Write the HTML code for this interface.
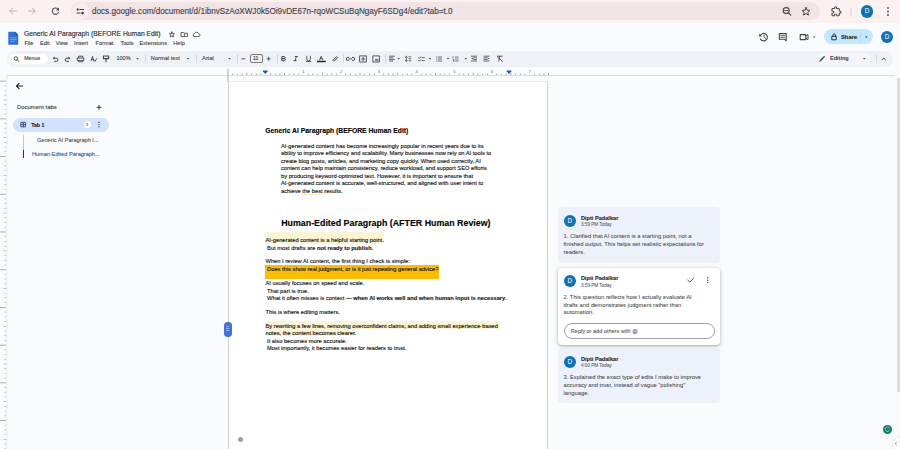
<!DOCTYPE html>
<html><head><meta charset="utf-8"><style>
*{box-sizing:border-box}
html,body{margin:0;padding:0;width:900px;height:449px;overflow:hidden;background:#f9fbfd;font-family:"Liberation Sans",sans-serif;color:#1f1f1f}
.a{position:absolute;white-space:nowrap}
.t{position:absolute;white-space:nowrap;line-height:1;-webkit-text-stroke-width:0.12px}
#chrome{position:absolute;left:0;top:0;width:900px;height:23px;background:#fbf1f1}
#omni{position:absolute;left:71px;top:2px;width:749px;height:18px;border-radius:9px;background:#f1e4e6}
#tb{position:absolute;left:7px;top:50.6px;width:886.3px;height:16.2px;border-radius:8px;background:#eef2f7}
.sep{position:absolute;width:0.8px;background:#d5d8dc}
#page{position:absolute;left:228px;top:81px;width:320px;height:380px;background:#fff;border:1px solid #cfd1d4;border-top-color:#e9eaec;border-bottom:none}
.doc{position:absolute;font-size:5.72px;line-height:1;margin-top:1.4px;white-space:nowrap;color:#1a1a1a;-webkit-text-stroke:0.15px #1a1a1a}
.card{position:absolute;left:557.8px;width:162.6px;border-radius:4px;background:#edf2fa}
.av{position:absolute;border-radius:50%;background:#0d71b8;color:#fff;text-align:center}
.cname{position:absolute;font-size:5.6px;font-weight:bold;line-height:1;white-space:nowrap;color:#2a2a2a}
.ctime{position:absolute;font-size:4.6px;line-height:1;white-space:nowrap;color:#5f6368}
.ctext{position:absolute;font-size:5.75px;line-height:7.8px;color:#3c4043;white-space:nowrap}
#root{position:absolute;left:0;top:0;width:900px;height:449px;overflow:hidden}
#icons{position:absolute;left:0;top:0;width:900px;height:449px;overflow:visible}
#icons .s{fill:none;stroke:#444746;stroke-width:1;stroke-linecap:round;stroke-linejoin:round}
#icons .f{fill:#444746;stroke:none}
</style></head><body>
<div id="root"><div id="chrome"></div><div id="omni"></div>
<div class="a" style="left:71.5px;top:2.5px;width:17px;height:17px;border-radius:50%;background:#f8eeee"></div>
<div class="t" style="left:92px;top:7.8px;font-size:8.14px;color:#3f3f3f;font-weight:normal;">docs.google.com/document/d/1ibnvSzAoXWJ0k5Oi9vDE67n-rqoWCSuBqNgayF6SDg4/edit?tab=t.0</div>
<div class="av" style="left:860.8px;top:5.3px;width:12.4px;height:12.4px;line-height:12.4px;font-size:6.5px">D</div>
<div class="t" style="left:24px;top:31.3px;font-size:6.77px;color:#1f1f1f;font-weight:normal;">Generic AI Paragraph (BEFORE Human Edit)</div>
<div class="t" style="left:24.4px;top:40.9px;font-size:5.6px;color:#444;font-weight:normal;">File</div>
<div class="t" style="left:40px;top:40.9px;font-size:5.6px;color:#444;font-weight:normal;">Edit</div>
<div class="t" style="left:55.8px;top:40.9px;font-size:5.6px;color:#444;font-weight:normal;">View</div>
<div class="t" style="left:74px;top:40.9px;font-size:5.6px;color:#444;font-weight:normal;">Insert</div>
<div class="t" style="left:95.6px;top:40.9px;font-size:5.6px;color:#444;font-weight:normal;">Format</div>
<div class="t" style="left:120.4px;top:40.9px;font-size:5.6px;color:#444;font-weight:normal;">Tools</div>
<div class="t" style="left:139.6px;top:40.9px;font-size:5.6px;color:#444;font-weight:normal;">Extensions</div>
<div class="t" style="left:173.3px;top:40.9px;font-size:5.6px;color:#444;font-weight:normal;">Help</div>
<div class="a" style="left:824.4px;top:29.3px;width:49px;height:15px;border-radius:7.5px;background:#c2e7ff"></div>
<div class="t" style="left:841px;top:34.9px;font-size:5.8px;color:#1f1f1f;font-weight:bold;">Share</div>
<div class="av" style="left:880.8px;top:30.8px;width:12.4px;height:12.4px;line-height:12.4px;font-size:6.3px">D</div>
<div id="tb"></div>
<div class="a" style="left:8.3px;top:54px;width:40px;height:10px;border-radius:5px;background:#fff"></div>
<div class="t" style="left:24.2px;top:56.2px;font-size:5.3px;color:#444;font-weight:normal;">Menus</div>
<div class="t" style="left:116.5px;top:56.2px;font-size:5.5px;color:#444;font-weight:normal;">100%</div>
<div class="t" style="left:150.8px;top:56.2px;font-size:5.7px;color:#444;font-weight:normal;">Normal text</div>
<div class="t" style="left:202px;top:56.2px;font-size:5.85px;color:#444;font-weight:normal;">Arial</div>
<div class="a" style="left:249.7px;top:53.8px;width:13.6px;height:9.2px;border:1px solid #777;border-radius:2px"></div>
<div class="t" style="left:253px;top:56.2px;font-size:5.3px;color:#333;font-weight:normal;">11</div>
<div class="a" style="left:815.5px;top:53px;width:55px;height:12px;border-radius:6px;background:#f3f5f9"></div>
<div class="t" style="left:830px;top:56.2px;font-size:5.5px;color:#4a4a4a;font-weight:bold;">Editing</div>
<div class="sep" style="left:145px;top:54px;height:9px"></div>
<div class="sep" style="left:195.5px;top:54px;height:9px"></div>
<div class="sep" style="left:236.5px;top:54px;height:9px"></div>
<div class="sep" style="left:276.5px;top:54px;height:9px"></div>
<div class="sep" style="left:343px;top:54px;height:9px"></div>
<div class="sep" style="left:385px;top:54px;height:9px"></div>
<div class="sep" style="left:876px;top:54px;height:9px"></div>
<div class="a" style="left:7px;top:75px;width:888px;height:1px;background:#dadce0"></div>
<div class="t" style="left:17.1px;top:105px;font-size:5.9px;color:#444;font-weight:normal;">Document tabs</div>
<div class="a" style="left:13.2px;top:117.6px;width:96px;height:14.8px;border-radius:7.4px;background:#d3e3fd"></div>
<div class="t" style="left:31.2px;top:122.7px;font-size:5.2px;color:#1f1f1f;font-weight:bold;">Tab 1</div>
<div class="a" style="left:83.5px;top:121.1px;width:7px;height:7px;border-radius:50%;background:#fff"></div>
<div class="t" style="left:37px;top:138.3px;font-size:5.6px;color:#555;font-weight:normal;">Generic AI Paragraph I...</div>
<div class="t" style="left:32px;top:152px;font-size:5.56px;color:#2f5fb3;font-weight:normal;">Human-Edited Paragraph...</div>
<div class="a" style="left:23px;top:135px;width:1px;height:23px;background:#c7c7c7"></div>
<div class="a" style="left:22.5px;top:150px;width:1.5px;height:8px;background:#333"></div>
<div id="page"></div>
<div class="t" style="left:265.3px;top:127.7px;font-size:6.78px;color:#000;font-weight:bold;">Generic AI Paragraph (BEFORE Human Edit)</div>
<div class="doc" style="left:281px;top:142.35px">AI-generated content has become increasingly popular in recent years due to its</div>
<div class="doc" style="left:281px;top:149.90px">ability to improve efficiency and scalability. Many businesses now rely on AI tools to</div>
<div class="doc" style="left:281px;top:157.45px">create blog posts, articles, and marketing copy quickly. When used correctly, AI</div>
<div class="doc" style="left:281px;top:165.00px">content can help maintain consistency, reduce workload, and support SEO efforts</div>
<div class="doc" style="left:281px;top:172.55px">by producing keyword-optimized text. However, it is important to ensure that</div>
<div class="doc" style="left:281px;top:180.10px">AI-generated content is accurate, well-structured, and aligned with user intent to</div>
<div class="doc" style="left:281px;top:187.65px">achieve the best results.</div>
<div class="t" style="left:281.2px;top:219.4px;font-size:8.86px;color:#000;font-weight:bold;">Human-Edited Paragraph (AFTER Human Review)</div>
<div class="a" style="left:265.1px;top:232.1px;width:119px;height:12.2px;background:#fcf4d4"></div>
<div class="a" style="left:265px;top:265px;width:173.5px;height:13.6px;background:#fbbc04"></div>
<div class="a" style="left:265px;top:321.1px;width:235px;height:7.6px;background:#fcf4d4"></div>
<div class="a" style="left:265px;top:328.7px;width:90px;height:6.9px;background:#fcf4d4"></div>
<div class="doc" style="left:265.5px;top:236.45px">AI-generated content is a helpful starting point.</div>
<div class="doc" style="left:265.5px;top:244.45px">&nbsp;But most drafts are <b>not ready to publish</b>.</div>
<div class="doc" style="left:265.5px;top:257.95px">When I review AI content, the first thing I check is simple:</div>
<div class="doc" style="left:265.5px;top:265.25px">&nbsp;Does this show real judgment, or is it just repeating general advice?</div>
<div class="doc" style="left:265.5px;top:279.85px">AI usually focuses on speed and scale.</div>
<div class="doc" style="left:265.5px;top:287.35px">&nbsp;That part is true.</div>
<div class="doc" style="left:265.5px;top:294.65px">&nbsp;What it often misses is context — <b>when AI works well and when human input is necessary</b>.</div>
<div class="doc" style="left:265.5px;top:308.75px">This is where editing matters.</div>
<div class="doc" style="left:265.5px;top:322.65px">By rewriting a few lines, removing overconfident claims, and adding small experience-based</div>
<div class="doc" style="left:265.5px;top:329.75px">notes, the content becomes clearer.</div>
<div class="doc" style="left:265.5px;top:337.35px">&nbsp;It also becomes more accurate.</div>
<div class="doc" style="left:265.5px;top:344.85px">&nbsp;Most importantly, it becomes easier for readers to trust.</div>
<div class="a" style="left:401px;top:163.6px;width:15.5px;height:0.9px;background:#f0cf6a;opacity:.45"></div>
<div class="a" style="left:413px;top:178.6px;width:23.5px;height:0.9px;background:#f0cf6a;opacity:.45"></div>
<div class="a" style="left:302px;top:193.8px;width:20.5px;height:0.9px;background:#f0cf6a;opacity:.45"></div>
<div class="a" style="left:224px;top:321.6px;width:7.5px;height:15.2px;border-radius:3.75px;background:#3f6fe0"></div>
<div class="a" style="left:237.8px;top:436.8px;width:5px;height:5px;border-radius:50%;background:#9aa0a6"></div>
<div class="card" style="top:207.3px;height:55.3px"></div>
<div class="card" style="top:267.8px;height:77px;background:#fff;box-shadow:0 1px 2px rgba(60,64,67,.3),0 1px 4px 1px rgba(60,64,67,.15)"></div>
<div class="card" style="top:348px;height:55px"></div>
<div class="av" style="left:563.50px;top:214.80px;width:12.4px;height:12.4px;line-height:12.4px;font-size:6.4px">D</div>
<div class="t" style="left:581px;top:215.99px;font-size:5.6px;color:#2a2a2a;font-weight:bold;">Dipti Padalkar</div>
<div class="t" style="left:581px;top:223.19px;font-size:4.6px;color:#6a6f74;font-weight:normal;">3:59 PM Today</div>
<div class="t" style="left:563.5px;top:234.13px;font-size:5.8px;color:#474747;font-weight:normal;-webkit-text-stroke-width:0.05px">1. Clarified that AI content is a starting point, not a</div>
<div class="t" style="left:563.5px;top:242.03px;font-size:5.8px;color:#474747;font-weight:normal;-webkit-text-stroke-width:0.05px">finished output. This helps set realistic expectations for</div>
<div class="t" style="left:563.5px;top:249.93px;font-size:5.8px;color:#474747;font-weight:normal;-webkit-text-stroke-width:0.05px">readers.</div>
<div class="av" style="left:563.50px;top:274.80px;width:12.4px;height:12.4px;line-height:12.4px;font-size:6.4px">D</div>
<div class="t" style="left:581px;top:276.49px;font-size:5.6px;color:#2a2a2a;font-weight:bold;">Dipti Padalkar</div>
<div class="t" style="left:581px;top:283.69px;font-size:4.6px;color:#6a6f74;font-weight:normal;">3:59 PM Today</div>
<div class="t" style="left:563.5px;top:294.63px;font-size:5.8px;color:#474747;font-weight:normal;-webkit-text-stroke-width:0.05px">2. This question reflects how I actually evaluate AI</div>
<div class="t" style="left:563.5px;top:302.53px;font-size:5.8px;color:#474747;font-weight:normal;-webkit-text-stroke-width:0.05px">drafts and demonstrates judgment rather than</div>
<div class="t" style="left:563.5px;top:310.43px;font-size:5.8px;color:#474747;font-weight:normal;-webkit-text-stroke-width:0.05px">automation.</div>
<div class="av" style="left:563.50px;top:355.80px;width:12.4px;height:12.4px;line-height:12.4px;font-size:6.4px">D</div>
<div class="t" style="left:581px;top:356.69px;font-size:5.6px;color:#2a2a2a;font-weight:bold;">Dipti Padalkar</div>
<div class="t" style="left:581px;top:363.89px;font-size:4.6px;color:#6a6f74;font-weight:normal;">4:00 PM Today</div>
<div class="t" style="left:563.5px;top:374.83px;font-size:5.8px;color:#474747;font-weight:normal;-webkit-text-stroke-width:0.05px">3. Explained the exact type of edits I make to improve</div>
<div class="t" style="left:563.5px;top:382.73px;font-size:5.8px;color:#474747;font-weight:normal;-webkit-text-stroke-width:0.05px">accuracy and trust, instead of vague "polishing"</div>
<div class="t" style="left:563.5px;top:390.63px;font-size:5.8px;color:#474747;font-weight:normal;-webkit-text-stroke-width:0.05px">language.</div>
<div class="a" style="left:564px;top:323px;width:151px;height:15.5px;border:0.9px solid #9ea2a6;border-radius:8px;background:#fff"></div>
<div class="t" style="left:570.8px;top:328.6px;font-size:5.55px;color:#5f6368;font-weight:normal;">Reply or add others with @</div>
<div class="a" style="left:896.5px;top:78px;width:3.5px;height:314px;background:#dadce0"></div>
<div class="a" style="left:882.8px;top:424.5px;width:9px;height:9px;border-radius:50%;background:#16796b"></div>
<svg id="icons" viewBox="0 0 900 449"><path d="M16.4,11 H9.8 M12.8,8 L9.8,11 L12.8,14" fill="none" stroke="#b3acac" stroke-width="0.9" stroke-linecap="round" stroke-linejoin="round" /><path d="M28.6,11 H35.2 M32.2,8 L35.2,11 L32.2,14" fill="none" stroke="#b3acac" stroke-width="0.9" stroke-linecap="round" stroke-linejoin="round" /><path d="M58.1,9.4 A3.2,3.2 0 1 0 58.4,12.4" fill="none" stroke="#474747" stroke-width="1.05" stroke-linecap="round" stroke-linejoin="round" /><path d="M59,7.6 L59,10.6 L56,10.6 Z" fill="#474747" /><rect x="76.8" y="8.6" width="2" height="1.8" rx="0.4" fill="#3b3b3b" stroke="none" stroke-width="1"/><path d="M79.8,9.5 H83.6" fill="none" stroke="#3b3b3b" stroke-width="1" stroke-linecap="round" stroke-linejoin="round" /><path d="M77,13 H80.2" fill="none" stroke="#3b3b3b" stroke-width="1" stroke-linecap="round" stroke-linejoin="round" /><circle cx="82.6" cy="13.1" r="1.3" fill="#3b3b3b" stroke="none" stroke-width="1"/><circle cx="786.2" cy="10.6" r="3" fill="none" stroke="#474747" stroke-width="1.1"/><path d="M788.5,12.9 L790.8,15.2" fill="none" stroke="#474747" stroke-width="1.2" stroke-linecap="round" stroke-linejoin="round" /><path d="M784.6,10.6 H787.8" fill="none" stroke="#474747" stroke-width="0.9" stroke-linecap="round" stroke-linejoin="round" /><path d="M806.00,7.50 L807.12,10.16 L809.99,10.40 L807.81,12.29 L808.47,15.10 L806.00,13.60 L803.53,15.10 L804.19,12.29 L802.01,10.40 L804.88,10.16 Z" fill="none" stroke="#474747" stroke-width="1.0" stroke-linecap="round" stroke-linejoin="round" /><path transform="translate(831.1,6.3) scale(0.43)" d="M20.5 11H19V7c0-1.1-.9-2-2-2h-4V3.5C13 2.12 11.88 1 10.5 1S8 2.12 8 3.5V5H4c-1.1 0-1.99.9-1.99 2v3.8H3.5c1.49 0 2.7 1.21 2.7 2.7s-1.21 2.7-2.7 2.7H2V20c0 1.1.9 2 2 2h3.8v-1.5c0-1.49 1.21-2.7 2.7-2.7 1.49 0 2.7 1.21 2.7 2.7V22H17c1.1 0 2-.9 2-2v-4h1.5c1.38 0 2.5-1.12 2.5-2.5S21.88 11 20.5 11z" fill="none" stroke="#474747" stroke-width="2.4"/><path d="M851,8 V15.5" fill="none" stroke="#d8cfcf" stroke-width="1" stroke-linecap="round" stroke-linejoin="round" /><circle cx="888" cy="8" r="0.9" fill="#474747" stroke="none" stroke-width="1"/><circle cx="888" cy="11.5" r="0.9" fill="#474747" stroke="none" stroke-width="1"/><circle cx="888" cy="15" r="0.9" fill="#474747" stroke="none" stroke-width="1"/><path d="M8.3,31.8 H15.2 L18.2,34.8 V44.7 H8.3 Z" fill="#2b6fd8" /><path d="M15.2,31.8 L18.2,34.8 H15.2 Z" fill="#1f55b0" /><path d="M10.5,37.8 H16 M10.5,39.6 H16 M10.5,41.4 H14.2" fill="none" stroke="#8fb6f2" stroke-width="0.75" stroke-linecap="round" stroke-linejoin="round" /><path d="M171.90,32.00 L172.63,33.69 L174.47,33.87 L173.09,35.09 L173.49,36.88 L171.90,35.95 L170.31,36.88 L170.71,35.09 L169.33,33.87 L171.17,33.69 Z" fill="none" stroke="#444746" stroke-width="0.9" stroke-linecap="round" stroke-linejoin="round" /><path d="M181.4,32.5 H183.6 L184.3,33.2 H187.4 V36.5 H181.4 Z M184.4,33.6 V36.2" fill="none" stroke="#444746" stroke-width="0.85" stroke-linecap="round" stroke-linejoin="round" /><path d="M194.2,36.5 H199 A1.4,1.4 0 0 0 198.8,33.8 A2.3,2.3 0 0 0 194.6,33.4 A1.6,1.6 0 0 0 194.2,36.5 Z" fill="none" stroke="#444746" stroke-width="0.85" stroke-linecap="round" stroke-linejoin="round" /><path d="M760.5,35.2 A3.7,3.7 0 1 1 760.4,38.9" fill="none" stroke="#444746" stroke-width="1.1" stroke-linecap="round" stroke-linejoin="round" /><path d="M759.2,33.4 L759.2,36.6 L762.1,36.6 Z" fill="#444746" /><path d="M764,35 V37.3 L765.5,38.3" fill="none" stroke="#444746" stroke-width="0.9" stroke-linecap="round" stroke-linejoin="round" /><path d="M779.3,33.6 H786.2 V40.8 L784.6,39.3 H779.3 Z" fill="none" stroke="#444746" stroke-width="1.1" stroke-linecap="round" stroke-linejoin="round" /><path d="M780.8,35.6 H784.6 M780.8,37.4 H784.6" fill="none" stroke="#444746" stroke-width="0.8" stroke-linecap="round" stroke-linejoin="round" /><path d="M800.2,34.6 H805.8 V39.6 H800.2 Z" fill="none" stroke="#444746" stroke-width="1.1" stroke-linecap="round" stroke-linejoin="round" /><path d="M805.8,36 L808,34.6 V39.6 L805.8,38.2" fill="none" stroke="#444746" stroke-width="1.0" stroke-linecap="round" stroke-linejoin="round" /><path d="M812.9000000000001,36.5 L815.5,36.5 L814.2,37.900000000000006 Z" fill="#444746" /><path d="M832.2,36.3 H836.2 V39.8 H832.2 Z" fill="none" stroke="#1f1f1f" stroke-width="0.9" stroke-linecap="round" stroke-linejoin="round" /><path d="M833,36.3 V35.2 A1.2,1.2 0 0 1 835.4,35.2 V36.3" fill="none" stroke="#1f1f1f" stroke-width="0.9" stroke-linecap="round" stroke-linejoin="round" /><path d="M865.0,36.5 L867.5999999999999,36.5 L866.3,37.900000000000006 Z" fill="#1f1f1f" /><path d="M860.6,31 V43" fill="none" stroke="#a6d3f2" stroke-width="0.6" stroke-linecap="round" stroke-linejoin="round" /><circle cx="15.9" cy="58.5" r="1.8" fill="none" stroke="#444746" stroke-width="0.9"/><path d="M17.2,59.8 L18.9,61.5" fill="none" stroke="#444746" stroke-width="1.0" stroke-linecap="round" stroke-linejoin="round" /><path d="M53.6,58.2 H56.3 A1.6,1.6 0 0 1 56.3,61.4 H54.6" fill="none" stroke="#444746" stroke-width="1" stroke-linecap="round" stroke-linejoin="round" /><path d="M52.8,58.2 L54.7,56.8 L54.7,59.6 Z" fill="#444746" /><path d="M69.6,58.2 H66.9 A1.6,1.6 0 0 0 66.9,61.4 H68.6" fill="none" stroke="#444746" stroke-width="1" stroke-linecap="round" stroke-linejoin="round" /><path d="M70.4,58.2 L68.5,56.8 L68.5,59.6 Z" fill="#444746" /><path d="M78.6,58 V56.2 H82.8 V58 M77.6,58 H83.8 V60.6 H77.6 Z M78.6,60.6 V61.8 H82.8 V60.6" fill="none" stroke="#444746" stroke-width="0.9" stroke-linecap="round" stroke-linejoin="round" /><path d="M91.2,60.8 L92.5,56.4 L93.8,60.8 M91.7,59.4 H93.3 M93.8,60 L94.8,61.4 L96.8,58.6" fill="none" stroke="#444746" stroke-width="0.9" stroke-linecap="round" stroke-linejoin="round" /><path d="M103.4,56 H108.6 V58.6 H103.4 Z M106,58.6 V61.8" fill="none" stroke="#444746" stroke-width="1.1" stroke-linecap="round" stroke-linejoin="round" /><path d="M136.2,58.099999999999994 L138.8,58.099999999999994 L137.5,59.5 Z" fill="#444746" /><path d="M186.7,58.099999999999994 L189.3,58.099999999999994 L188,59.5 Z" fill="#444746" /><path d="M228.2,58.099999999999994 L230.8,58.099999999999994 L229.5,59.5 Z" fill="#444746" /><path d="M241.8,58.8 H244.8" fill="none" stroke="#444746" stroke-width="0.9" stroke-linecap="round" stroke-linejoin="round" /><path d="M267.2,58.8 H270.2 M268.7,57.3 V60.3" fill="none" stroke="#444746" stroke-width="0.9" stroke-linecap="round" stroke-linejoin="round" /><path d="M282.2,56.6 H284 A1,1 0 0 1 284,58.6 H282.2 Z M282.2,58.6 H284.3 A1.05,1.05 0 0 1 284.3,60.7 H282.2 Z" fill="none" stroke="#444746" stroke-width="1.0" stroke-linecap="round" stroke-linejoin="round" /><path d="M295.2,56.5 H297.5 M294,60.7 H296.3 M296.4,56.5 L295.1,60.7" fill="none" stroke="#444746" stroke-width="0.95" stroke-linecap="round" stroke-linejoin="round" /><path d="M306.8,56.2 V59 A1.8,1.8 0 0 0 310.4,59 V56.2 M306.4,61.4 H310.8" fill="none" stroke="#444746" stroke-width="0.9" stroke-linecap="round" stroke-linejoin="round" /><path d="M319.6,60 L321.2,56.2 L322.8,60 M320.2,58.6 H322.2" fill="none" stroke="#444746" stroke-width="0.9" stroke-linecap="round" stroke-linejoin="round" /><rect x="317" y="60.8" width="8.8" height="1.4" rx="0" fill="#1f1f1f" stroke="none" stroke-width="1"/><path d="M333.2,60 L336.6,56.6 L337.6,57.6 L334.2,61 Z" fill="none" stroke="#444746" stroke-width="1.0" stroke-linecap="round" stroke-linejoin="round" /><path d="M348.6,57.4 H347.8 A1.5,1.5 0 0 0 347.8,60.4 H348.6 M352.4,57.4 H353.2 A1.5,1.5 0 0 1 353.2,60.4 H352.4 M349.3,58.9 H351.7" fill="none" stroke="#444746" stroke-width="1.0" stroke-linecap="round" stroke-linejoin="round" /><path d="M360,55.9 H366.4 V62 H360 Z M363.2,57.4 V60.6 M361.6,59 H364.8" fill="none" stroke="#444746" stroke-width="0.9" stroke-linecap="round" stroke-linejoin="round" /><path d="M373.2,55.9 H379.4 V62 H373.2 Z" fill="none" stroke="#444746" stroke-width="0.9" stroke-linecap="round" stroke-linejoin="round" /><path d="M374.6,60.6 L376,58.6 L377,59.8 L378,58.8 L378.6,60.6 Z" fill="#444746" /><path d="M389.4,56.2 H394.4 M389.4,57.8 H392.8 M389.4,59.4 H394.4 M389.4,61 H392.8" fill="none" stroke="#444746" stroke-width="0.8" stroke-linecap="round" stroke-linejoin="round" /><path d="M397.4,58.099999999999994 L400.0,58.099999999999994 L398.7,59.5 Z" fill="#444746" /><path d="M406.3,56.3 V61.3 M405.3,57.3 L406.3,56.3 L407.3,57.3 M405.3,60.3 L406.3,61.3 L407.3,60.3 M409,56.8 H410.8 M409,58.8 H410.8 M409,60.8 H410.8" fill="none" stroke="#444746" stroke-width="0.8" stroke-linecap="round" stroke-linejoin="round" /><path d="M418.6,57.6 L419.4,58.4 L420.8,56.8 M418.6,60.4 L419.4,61.2 L420.8,59.6 M422,57.6 H424.4 M422,60.6 H424.4" fill="none" stroke="#444746" stroke-width="0.8" stroke-linecap="round" stroke-linejoin="round" /><path d="M428.7,58.099999999999994 L431.3,58.099999999999994 L430,59.5 Z" fill="#444746" /><circle cx="436.8" cy="57" r="0.6" fill="#444746" stroke="none" stroke-width="1"/><circle cx="436.8" cy="59" r="0.6" fill="#444746" stroke="none" stroke-width="1"/><circle cx="436.8" cy="61" r="0.6" fill="#444746" stroke="none" stroke-width="1"/><path d="M438.4,57 H441.6 M438.4,59 H441.6 M438.4,61 H441.6" fill="none" stroke="#444746" stroke-width="0.8" stroke-linecap="round" stroke-linejoin="round" /><path d="M446.7,58.099999999999994 L449.3,58.099999999999994 L448,59.5 Z" fill="#444746" /><path d="M453,56.6 V58 M453,59.8 H454 L453,61.2 H454 M455.4,57 H458.2 M455.4,59 H458.2 M455.4,61 H458.2" fill="none" stroke="#444746" stroke-width="0.7" stroke-linecap="round" stroke-linejoin="round" /><path d="M464.5,58.099999999999994 L467.1,58.099999999999994 L465.8,59.5 Z" fill="#444746" /><path d="M471.4,56.2 H476.6 M473.6,57.8 H476.6 M473.6,59.4 H476.6 M471.4,61 H476.6" fill="none" stroke="#444746" stroke-width="0.8" stroke-linecap="round" stroke-linejoin="round" /><path d="M471.2,58.6 L472.8,57.6 V59.6 Z" fill="#444746" /><path d="M484,56.2 H489.2 M484,57.8 H487 M484,59.4 H487 M484,61 H489.2" fill="none" stroke="#444746" stroke-width="0.8" stroke-linecap="round" stroke-linejoin="round" /><path d="M489.4,58.6 L487.8,57.6 V59.6 Z" fill="#444746" /><path d="M497.4,56.2 H502.2 M499.8,56.2 L498.8,61 M497.6,57.2 L502.6,61.4" fill="none" stroke="#444746" stroke-width="0.9" stroke-linecap="round" stroke-linejoin="round" /><path d="M820.2,60.8 L824.2,56.8" fill="none" stroke="#444746" stroke-width="1.4" stroke-linecap="round" stroke-linejoin="round" /><path d="M820,61 L819.8,61.2" fill="none" stroke="#444746" stroke-width="1.0" stroke-linecap="round" stroke-linejoin="round" /><path d="M863.0,58.099999999999994 L865.5999999999999,58.099999999999994 L864.3,59.5 Z" fill="#444746" /><path d="M882,59.8 L883.7,58.1 L885.4,59.8" fill="none" stroke="#444746" stroke-width="1.0" stroke-linecap="round" stroke-linejoin="round" /><path d="M22.5,86 H16.5 M19.1,83.4 L16.5,86 L19.1,88.6" fill="none" stroke="#1f1f1f" stroke-width="1.1" stroke-linecap="round" stroke-linejoin="round" /><path d="M97,107.3 H101 M99,105.3 V109.3" fill="none" stroke="#1f1f1f" stroke-width="0.9" stroke-linecap="round" stroke-linejoin="round" /><path d="M21.2,122.4 H25.6 V126.8 H21.2 Z M21.2,124.6 H25.6 M23.4,122.4 V126.8" fill="none" stroke="#1f3760" stroke-width="0.8" stroke-linecap="round" stroke-linejoin="round" /><text x="87" y="126.1" font-size="4.2" text-anchor="middle" fill="#333" font-family="Liberation Sans">3</text><circle cx="99" cy="122.4" r="0.65" fill="#1f1f1f" stroke="none" stroke-width="1"/><circle cx="99" cy="124.6" r="0.65" fill="#1f1f1f" stroke="none" stroke-width="1"/><circle cx="99" cy="126.8" r="0.65" fill="#1f1f1f" stroke="none" stroke-width="1"/><path d="M687.8,280.2 L689.8,282.2 L693.6,278.2" fill="none" stroke="#35567f" stroke-width="1.0" stroke-linecap="round" stroke-linejoin="round" /><circle cx="707.6" cy="277.8" r="0.7" fill="#444746" stroke="none" stroke-width="1"/><circle cx="707.6" cy="280.2" r="0.7" fill="#444746" stroke="none" stroke-width="1"/><circle cx="707.6" cy="282.6" r="0.7" fill="#444746" stroke="none" stroke-width="1"/><rect x="232.37" y="73.70" width="0.7" height="1.3" fill="#80868b"/><rect x="237.08" y="73.70" width="0.7" height="1.3" fill="#80868b"/><rect x="241.80" y="73.70" width="0.7" height="1.3" fill="#80868b"/><rect x="246.51" y="72.80" width="0.7" height="2.2" fill="#80868b"/><rect x="251.22" y="73.70" width="0.7" height="1.3" fill="#80868b"/><rect x="255.94" y="73.70" width="0.7" height="1.3" fill="#80868b"/><rect x="260.65" y="73.70" width="0.7" height="1.3" fill="#80868b"/><rect x="270.08" y="73.70" width="0.7" height="1.3" fill="#80868b"/><rect x="274.80" y="73.70" width="0.7" height="1.3" fill="#80868b"/><rect x="279.51" y="73.70" width="0.7" height="1.3" fill="#80868b"/><rect x="284.23" y="72.80" width="0.7" height="2.2" fill="#80868b"/><rect x="288.94" y="73.70" width="0.7" height="1.3" fill="#80868b"/><rect x="293.66" y="73.70" width="0.7" height="1.3" fill="#80868b"/><rect x="298.38" y="73.70" width="0.7" height="1.3" fill="#80868b"/><rect x="307.80" y="73.70" width="0.7" height="1.3" fill="#80868b"/><rect x="312.52" y="73.70" width="0.7" height="1.3" fill="#80868b"/><rect x="317.23" y="73.70" width="0.7" height="1.3" fill="#80868b"/><rect x="321.95" y="72.80" width="0.7" height="2.2" fill="#80868b"/><rect x="326.66" y="73.70" width="0.7" height="1.3" fill="#80868b"/><rect x="331.38" y="73.70" width="0.7" height="1.3" fill="#80868b"/><rect x="336.09" y="73.70" width="0.7" height="1.3" fill="#80868b"/><rect x="345.52" y="73.70" width="0.7" height="1.3" fill="#80868b"/><rect x="350.24" y="73.70" width="0.7" height="1.3" fill="#80868b"/><rect x="354.95" y="73.70" width="0.7" height="1.3" fill="#80868b"/><rect x="359.67" y="72.80" width="0.7" height="2.2" fill="#80868b"/><rect x="364.38" y="73.70" width="0.7" height="1.3" fill="#80868b"/><rect x="369.10" y="73.70" width="0.7" height="1.3" fill="#80868b"/><rect x="373.81" y="73.70" width="0.7" height="1.3" fill="#80868b"/><rect x="383.25" y="73.70" width="0.7" height="1.3" fill="#80868b"/><rect x="387.96" y="73.70" width="0.7" height="1.3" fill="#80868b"/><rect x="392.67" y="73.70" width="0.7" height="1.3" fill="#80868b"/><rect x="397.39" y="72.80" width="0.7" height="2.2" fill="#80868b"/><rect x="402.10" y="73.70" width="0.7" height="1.3" fill="#80868b"/><rect x="406.82" y="73.70" width="0.7" height="1.3" fill="#80868b"/><rect x="411.53" y="73.70" width="0.7" height="1.3" fill="#80868b"/><rect x="420.96" y="73.70" width="0.7" height="1.3" fill="#80868b"/><rect x="425.68" y="73.70" width="0.7" height="1.3" fill="#80868b"/><rect x="430.39" y="73.70" width="0.7" height="1.3" fill="#80868b"/><rect x="435.11" y="72.80" width="0.7" height="2.2" fill="#80868b"/><rect x="439.82" y="73.70" width="0.7" height="1.3" fill="#80868b"/><rect x="444.54" y="73.70" width="0.7" height="1.3" fill="#80868b"/><rect x="449.25" y="73.70" width="0.7" height="1.3" fill="#80868b"/><rect x="458.68" y="73.70" width="0.7" height="1.3" fill="#80868b"/><rect x="463.40" y="73.70" width="0.7" height="1.3" fill="#80868b"/><rect x="468.12" y="73.70" width="0.7" height="1.3" fill="#80868b"/><rect x="472.83" y="72.80" width="0.7" height="2.2" fill="#80868b"/><rect x="477.54" y="73.70" width="0.7" height="1.3" fill="#80868b"/><rect x="482.26" y="73.70" width="0.7" height="1.3" fill="#80868b"/><rect x="486.97" y="73.70" width="0.7" height="1.3" fill="#80868b"/><rect x="496.40" y="73.70" width="0.7" height="1.3" fill="#80868b"/><rect x="501.12" y="73.70" width="0.7" height="1.3" fill="#80868b"/><rect x="505.83" y="73.70" width="0.7" height="1.3" fill="#80868b"/><rect x="510.55" y="72.80" width="0.7" height="2.2" fill="#80868b"/><rect x="515.26" y="73.70" width="0.7" height="1.3" fill="#80868b"/><rect x="519.98" y="73.70" width="0.7" height="1.3" fill="#80868b"/><rect x="524.70" y="73.70" width="0.7" height="1.3" fill="#80868b"/><rect x="534.12" y="73.70" width="0.7" height="1.3" fill="#80868b"/><rect x="538.84" y="73.70" width="0.7" height="1.3" fill="#80868b"/><rect x="543.55" y="73.70" width="0.7" height="1.3" fill="#80868b"/><rect x="548.27" y="72.80" width="0.7" height="2.2" fill="#80868b"/><text x="303.44" y="73.4" font-size="4" text-anchor="middle" fill="#5f6368" font-family="Liberation Sans">1</text><text x="341.16" y="73.4" font-size="4" text-anchor="middle" fill="#5f6368" font-family="Liberation Sans">2</text><text x="378.88" y="73.4" font-size="4" text-anchor="middle" fill="#5f6368" font-family="Liberation Sans">3</text><text x="416.60" y="73.4" font-size="4" text-anchor="middle" fill="#5f6368" font-family="Liberation Sans">4</text><text x="454.32" y="73.4" font-size="4" text-anchor="middle" fill="#5f6368" font-family="Liberation Sans">5</text><text x="492.04" y="73.4" font-size="4" text-anchor="middle" fill="#5f6368" font-family="Liberation Sans">6</text><text x="529.76" y="73.4" font-size="4" text-anchor="middle" fill="#5f6368" font-family="Liberation Sans">7</text><rect x="227.5" y="68.8" width="0.9" height="12.6" fill="#a4a7ab"/><text x="228" y="73.4" font-size="4" text-anchor="middle" fill="#5f6368" font-family="Liberation Sans"></text><path d="M263,70.6 H267.6 V71.4 L265.3,74 L263,71.4 Z" fill="#2458c6" /><path d="M506.7,70.6 H511.3 V71.4 L509,74 L506.7,71.4 Z" fill="#2458c6" /><rect x="0" y="80.70" width="6" height="0.8" fill="#9aa0a6"/><rect x="4.60" y="85.42" width="1.4" height="0.7" fill="#a0a4a8"/><rect x="4.60" y="90.13" width="1.4" height="0.7" fill="#a0a4a8"/><rect x="4.60" y="94.84" width="1.4" height="0.7" fill="#a0a4a8"/><rect x="3.60" y="99.56" width="2.4" height="0.7" fill="#a0a4a8"/><rect x="4.60" y="104.28" width="1.4" height="0.7" fill="#a0a4a8"/><rect x="4.60" y="108.99" width="1.4" height="0.7" fill="#a0a4a8"/><rect x="4.60" y="113.70" width="1.4" height="0.7" fill="#a0a4a8"/><rect x="0" y="118.42" width="6" height="0.8" fill="#9aa0a6"/><rect x="4.60" y="123.14" width="1.4" height="0.7" fill="#a0a4a8"/><rect x="4.60" y="127.85" width="1.4" height="0.7" fill="#a0a4a8"/><rect x="4.60" y="132.56" width="1.4" height="0.7" fill="#a0a4a8"/><rect x="3.60" y="137.28" width="2.4" height="0.7" fill="#a0a4a8"/><rect x="4.60" y="142.00" width="1.4" height="0.7" fill="#a0a4a8"/><rect x="4.60" y="146.71" width="1.4" height="0.7" fill="#a0a4a8"/><rect x="4.60" y="151.42" width="1.4" height="0.7" fill="#a0a4a8"/><rect x="0" y="156.14" width="6" height="0.8" fill="#9aa0a6"/><rect x="4.60" y="160.85" width="1.4" height="0.7" fill="#a0a4a8"/><rect x="4.60" y="165.57" width="1.4" height="0.7" fill="#a0a4a8"/><rect x="4.60" y="170.28" width="1.4" height="0.7" fill="#a0a4a8"/><rect x="3.60" y="175.00" width="2.4" height="0.7" fill="#a0a4a8"/><rect x="4.60" y="179.71" width="1.4" height="0.7" fill="#a0a4a8"/><rect x="4.60" y="184.43" width="1.4" height="0.7" fill="#a0a4a8"/><rect x="4.60" y="189.14" width="1.4" height="0.7" fill="#a0a4a8"/><rect x="0" y="193.86" width="6" height="0.8" fill="#9aa0a6"/><rect x="4.60" y="198.57" width="1.4" height="0.7" fill="#a0a4a8"/><rect x="4.60" y="203.29" width="1.4" height="0.7" fill="#a0a4a8"/><rect x="4.60" y="208.00" width="1.4" height="0.7" fill="#a0a4a8"/><rect x="3.60" y="212.72" width="2.4" height="0.7" fill="#a0a4a8"/><rect x="4.60" y="217.43" width="1.4" height="0.7" fill="#a0a4a8"/><rect x="4.60" y="222.15" width="1.4" height="0.7" fill="#a0a4a8"/><rect x="4.60" y="226.86" width="1.4" height="0.7" fill="#a0a4a8"/><rect x="0" y="231.58" width="6" height="0.8" fill="#9aa0a6"/><rect x="4.60" y="236.29" width="1.4" height="0.7" fill="#a0a4a8"/><rect x="4.60" y="241.01" width="1.4" height="0.7" fill="#a0a4a8"/><rect x="4.60" y="245.72" width="1.4" height="0.7" fill="#a0a4a8"/><rect x="3.60" y="250.44" width="2.4" height="0.7" fill="#a0a4a8"/><rect x="4.60" y="255.15" width="1.4" height="0.7" fill="#a0a4a8"/><rect x="4.60" y="259.87" width="1.4" height="0.7" fill="#a0a4a8"/><rect x="4.60" y="264.58" width="1.4" height="0.7" fill="#a0a4a8"/><rect x="0" y="269.30" width="6" height="0.8" fill="#9aa0a6"/><rect x="4.60" y="274.01" width="1.4" height="0.7" fill="#a0a4a8"/><rect x="4.60" y="278.73" width="1.4" height="0.7" fill="#a0a4a8"/><rect x="4.60" y="283.44" width="1.4" height="0.7" fill="#a0a4a8"/><rect x="3.60" y="288.16" width="2.4" height="0.7" fill="#a0a4a8"/><rect x="4.60" y="292.87" width="1.4" height="0.7" fill="#a0a4a8"/><rect x="4.60" y="297.59" width="1.4" height="0.7" fill="#a0a4a8"/><rect x="4.60" y="302.31" width="1.4" height="0.7" fill="#a0a4a8"/><rect x="0" y="307.02" width="6" height="0.8" fill="#9aa0a6"/><rect x="4.60" y="311.73" width="1.4" height="0.7" fill="#a0a4a8"/><rect x="4.60" y="316.45" width="1.4" height="0.7" fill="#a0a4a8"/><rect x="4.60" y="321.17" width="1.4" height="0.7" fill="#a0a4a8"/><rect x="3.60" y="325.88" width="2.4" height="0.7" fill="#a0a4a8"/><rect x="4.60" y="330.59" width="1.4" height="0.7" fill="#a0a4a8"/><rect x="4.60" y="335.31" width="1.4" height="0.7" fill="#a0a4a8"/><rect x="4.60" y="340.02" width="1.4" height="0.7" fill="#a0a4a8"/><rect x="0" y="344.74" width="6" height="0.8" fill="#9aa0a6"/><rect x="4.60" y="349.45" width="1.4" height="0.7" fill="#a0a4a8"/><rect x="4.60" y="354.17" width="1.4" height="0.7" fill="#a0a4a8"/><rect x="4.60" y="358.88" width="1.4" height="0.7" fill="#a0a4a8"/><rect x="3.60" y="363.60" width="2.4" height="0.7" fill="#a0a4a8"/><rect x="4.60" y="368.31" width="1.4" height="0.7" fill="#a0a4a8"/><rect x="4.60" y="373.03" width="1.4" height="0.7" fill="#a0a4a8"/><rect x="4.60" y="377.75" width="1.4" height="0.7" fill="#a0a4a8"/><rect x="0" y="382.46" width="6" height="0.8" fill="#9aa0a6"/><rect x="4.60" y="387.17" width="1.4" height="0.7" fill="#a0a4a8"/><rect x="4.60" y="391.89" width="1.4" height="0.7" fill="#a0a4a8"/><rect x="4.60" y="396.60" width="1.4" height="0.7" fill="#a0a4a8"/><rect x="3.60" y="401.32" width="2.4" height="0.7" fill="#a0a4a8"/><rect x="4.60" y="406.03" width="1.4" height="0.7" fill="#a0a4a8"/><rect x="4.60" y="410.75" width="1.4" height="0.7" fill="#a0a4a8"/><rect x="4.60" y="415.46" width="1.4" height="0.7" fill="#a0a4a8"/><rect x="0" y="420.18" width="6" height="0.8" fill="#9aa0a6"/><rect x="4.60" y="424.89" width="1.4" height="0.7" fill="#a0a4a8"/><rect x="4.60" y="429.61" width="1.4" height="0.7" fill="#a0a4a8"/><rect x="4.60" y="434.32" width="1.4" height="0.7" fill="#a0a4a8"/><rect x="3.60" y="439.04" width="2.4" height="0.7" fill="#a0a4a8"/><rect x="4.60" y="443.75" width="1.4" height="0.7" fill="#a0a4a8"/><rect x="4.60" y="448.47" width="1.4" height="0.7" fill="#a0a4a8"/><rect x="6.6" y="76" width="0.6" height="373" fill="#e3e5e8"/><path d="M226.6,326.6 H229 M226.6,328.6 H229 M226.6,330.6 H229" fill="none" stroke="#dfe8ff" stroke-width="0.6" stroke-linecap="round" stroke-linejoin="round" /><path d="M889.3,427.6 A2.3,2.3 0 1 0 889.4,430.6" fill="none" stroke="#9fd6cc" stroke-width="0.9" stroke-linecap="round" stroke-linejoin="round" /><path d="M900,436.5 A7.5,7.5 0 0 0 900,451.5 Z" fill="#ffffff" stroke="#e3e3e3" stroke-width="0.6"/><path d="M896.6,442.2 L895.2,443.6 L896.6,445" fill="none" stroke="#5f6368" stroke-width="0.7" stroke-linecap="round" stroke-linejoin="round" /></svg>
</div></body></html>
